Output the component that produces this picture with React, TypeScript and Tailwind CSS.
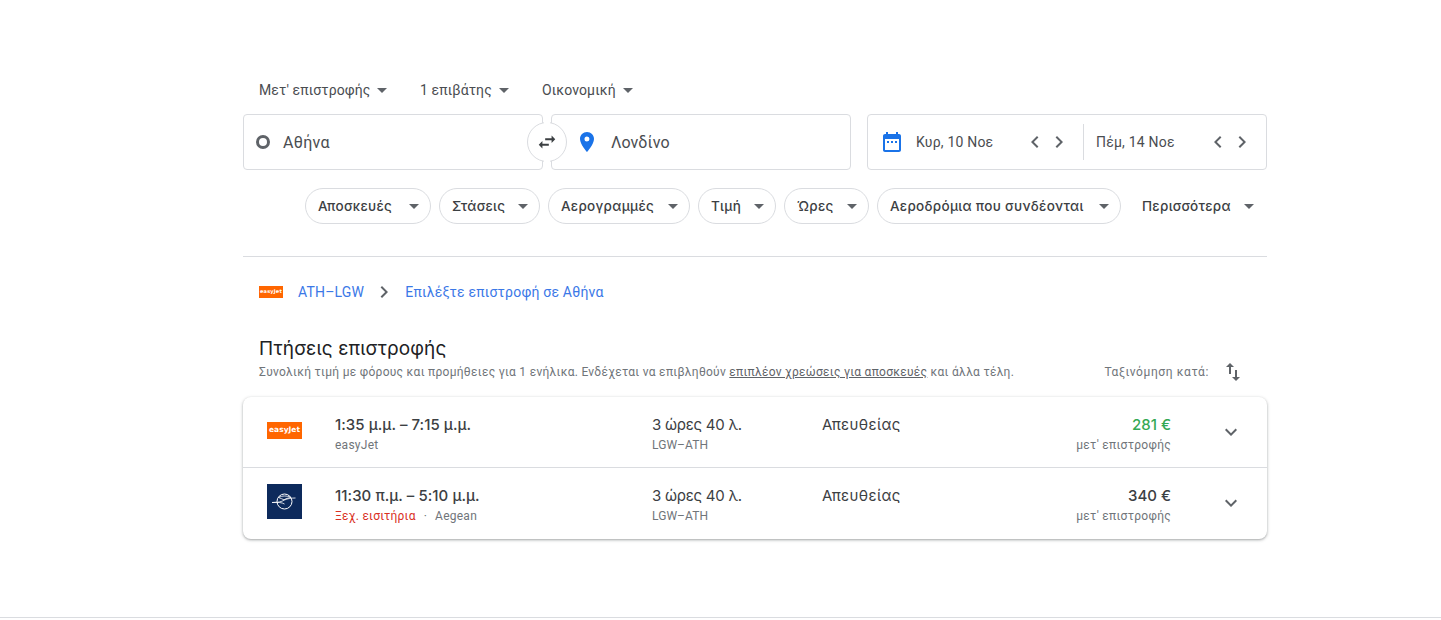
import React from "react";

const Caret = ({ className = "" }: { className?: string }) => (
  <svg width="10" height="5" viewBox="0 0 10 5" className={`shrink-0 ${className}`}><path d="M0 0l5 5 5-5z" fill="#5f6368" /></svg>
);
const Chev = ({ dir }: { dir: "l" | "r" }) => (
  <svg width="24" height="24" viewBox="0 0 24 24" fill="#5f6368">
    {dir === "l" ? <path d="M15.41 7.41 14 6l-6 6 6 6 1.41-1.41L10.83 12z" /> : <path d="M8.59 16.59 10 18l6-6-6-6-1.41 1.41L13.17 12z" />}
  </svg>
);
const Expand = () => (
  <svg width="24" height="24" viewBox="0 0 24 24" fill="#5f6368"><path d="M16.59 8.59 12 13.17 7.41 8.59 6 10l6 6 6-6z" /></svg>
);

const Top = ({ label, w }: { label: string; w: string }) => (
  <div className={`flex items-center gap-[7px] pl-4 ${w}`}>
    <span className="text-[14px] text-[#4a4d51] tracking-[0.1px]">{label}</span>
    <Caret />
  </div>
);

const Chip = ({ label, w }: { label: string; w: string }) => (
  <div className={`flex h-9 items-center justify-between rounded-full border border-[#dadce0] pl-3 pr-[11px] ${w}`}>
    <span className="font-['Inter',sans-serif] text-[13.5px] font-medium text-[#3c4043] tracking-[0.3px]">{label}</span>
    <Caret />
  </div>
);

const EasyJet = ({ big }: { big?: boolean }) => (
  <div className={`flex items-center justify-center bg-[#ff6600] font-['DejaVu_Sans',sans-serif] font-bold text-[#fff] ${big ? "h-[17px] w-[35px] text-[7.5px]" : "h-3 w-6 text-[5px]"}`}>easyJet</div>
);

const Aegean = () => (
  <div className="flex h-[35px] w-[35px] items-center justify-center bg-[#0d2a5c]">
    <svg width="35" height="35" viewBox="0 0 35 35" fill="none" stroke="#fff">
      <circle cx="17.500" cy="17.500" r="7.500" strokeWidth="1" />
      <path d="M5 18.500c6 0 9-.500 12.500-2.500 3-1.500 7-2 11-2" strokeWidth="0.8" />
      <path d="M11.500 13.500c4-2 8-2 12.500 0-3 .500-5.500 1.200-7 2.300-2-.800-3.500-1.700-5.500-2.300zM5 18.500c6-.500 10 0 12.500 1.500" strokeWidth="0.8" />
    </svg>
  </div>
);

const Main = ({ children, cls = "" }: { children: React.ReactNode; cls?: string }) => (
  <div className={`font-['Inter',sans-serif] text-[15px] leading-5 text-[#3c4043] ${cls}`}>{children}</div>
);

const Row = ({ logo, time, sub, price, green, h }: { logo: React.ReactNode; time: string; sub: React.ReactNode; price: string; green?: boolean; h: string }) => (
  <div className={`flex items-center ${h}`}>
    <div className="mb-1 flex w-[92px] justify-start pl-6">{logo}</div>
    <div className="mt-1 w-[317px]">
      <Main cls="font-medium tracking-[0.05px]">{time}</Main>
      <div className="mt-[2px] text-[12px] leading-4 text-[#70757a] tracking-[0.25px]">{sub}</div>
    </div>
    <div className="mt-1 w-[170px]">
      <Main cls="tracking-[-0.25px]">3 ώρες 40 λ.</Main>
      <div className="mt-[2px] text-[12px] leading-4 text-[#70757a] tracking-[0.15px]">LGW–ATH</div>
    </div>
    <div className="mt-1 w-[120px]">
      <Main cls="tracking-[0.4px]">Απευθείας</Main>
      <div className="mt-[2px] h-4" />
    </div>
    <div className="mt-1 w-[229px] text-right">
      <div className={`font-['Inter',sans-serif] text-[15px] font-medium leading-5 ${green ? "text-[#34a853]" : "text-[#3c4043]"}`}>{price}</div>
      <div className="mt-[2px] text-[12px] leading-4 text-[#70757a] tracking-[0.28px]">μετ' επιστροφής</div>
    </div>
    <div className="ml-[48px]"><Expand /></div>
  </div>
);

export default function App() {
  return (
    <div className="relative h-[620px] w-full overflow-hidden bg-white font-['Roboto',sans-serif]">
      <div className="ml-[243px] w-[1024px] pt-[79px]">
        <div className="flex h-[22px] items-center">
          <Top label="Μετ' επιστροφής" w="w-[161px]" />
          <Top label="1 επιβάτης" w="w-[122px]" />
          <Top label="Οικονομική" w="w-auto" />
        </div>

        <div className="mt-[13px] flex h-14">
          <div className="relative flex">
            <div className="flex h-14 w-[300px] items-center rounded border border-[#dadce0] pl-3">
              <span className="mr-[13px] block h-[14px] w-[14px] rounded-full border-[3px] border-[#5f6368]" />
              <span className="mt-[2px] text-[16px] text-[#4a4d51] tracking-[0.3px]">Αθήνα</span>
            </div>
            <div className="ml-2 flex h-14 w-[300px] items-center rounded border border-[#dadce0] pl-6">
              <svg width="24" height="24" viewBox="0 0 24 24" fill="#1a73e8" className="mr-[12px] ml-[-1px]"><path d="M12 2C8.130 2 5 5.130 5 9c0 5.250 7 13 7 13s7-7.750 7-13c0-3.870-3.130-7-7-7zm0 9.500a2.500 2.500 0 1 1 0-5 2.500 2.500 0 0 1 0 5z" /></svg>
              <span className="mt-[2px] text-[16px] text-[#4a4d51] tracking-[0.1px]">Λονδίνο</span>
            </div>
            <div className="absolute left-[284px] top-[8px] flex h-10 w-10 items-center justify-center rounded-full border border-[#dadce0] bg-white">
              <svg width="22" height="22" viewBox="0 0 24 24" fill="#3c4043"><path d="M6.990 11 3 15l3.990 4v-3H14v-2H6.990zM21 9l-3.990-4v3H10v2h7.010v3z" /></svg>
            </div>
            <div className="absolute left-[301px] top-0 h-[10px] w-[6px] bg-white" />
            <div className="absolute left-[301px] bottom-0 h-[10px] w-[6px] bg-white" />
          </div>

          <div className="ml-4 flex h-14 w-[400px] items-center rounded border border-[#dadce0] pl-[12px]">
            <svg width="24" height="24" viewBox="0 0 24 24" fill="#1a73e8" className="mr-[12px]"><path d="M19 4h-1V2h-2v2H8V2H6v2H5c-1.110 0-2 .900-2 2v14c0 1.100.890 2 2 2h14c1.100 0 2-.900 2-2V6c0-1.100-.900-2-2-2zm0 16H5V9h14zM7 11h2v2H7zm4 0h2v2h-2zm4 0h2v2h-2z" /></svg>
            <span className="w-[107px] text-[14px] text-[#4a4d51] tracking-[0.2px]">Κυρ, 10 Νοε</span>
            <Chev dir="l" /><Chev dir="r" />
            <span className="ml-[12px] h-9 w-px bg-[#dadce0]" />
            <span className="ml-3 w-[110px] text-[14px] text-[#4a4d51] tracking-[0.2px]">Πέμ, 14 Νοε</span>
            <Chev dir="l" /><Chev dir="r" />
          </div>
        </div>

        <div className="mt-[18px] flex items-center gap-2 pl-[62px]">
          <Chip label="Αποσκευές" w="w-[126px]" />
          <Chip label="Στάσεις" w="w-[101px]" />
          <Chip label="Αερογραμμές" w="w-[142px]" />
          <Chip label="Τιμή" w="w-[78px]" />
          <Chip label="Ώρες" w="w-[85px]" />
          <Chip label="Αεροδρόμια που συνδέονται" w="w-[244px]" />
          <div className="flex h-9 w-[125px] items-center justify-between pl-[13px] pr-0">
            <span className="font-['Inter',sans-serif] text-[13.5px] font-medium text-[#3c4043] tracking-[0.3px]">Περισσότερα</span>
            <Caret />
          </div>
        </div>

        <div className="mt-8 h-px bg-[#dadce0]" />

        <div className="mt-[27px] flex h-[16px] items-center pl-4 text-[14px] text-[#3b78e7] tracking-[0.2px]">
          <EasyJet />
          <span className="ml-[15px]">ATH–LGW</span>
          <span className="ml-[8px]"><Chev dir="r" /></span>
          <span className="ml-[9px]">Επιλέξτε επιστροφή σε Αθήνα</span>
        </div>

        <div className="mt-[35px] pl-4 font-['Inter',sans-serif] text-[19px] leading-[28px] text-[#202124] tracking-[0.12px]">Πτήσεις επιστροφής</div>
        <div className="-mt-px flex h-5 items-center pl-4">
          <span className="text-[12px] text-[#70757a] tracking-[0.28px]">
            Συνολική τιμή με φόρους και προμήθειες για 1 ενήλικα. Ενδέχεται να επιβληθούν <span className="text-[#5f6368] underline">επιπλέον χρεώσεις για αποσκευές</span> και άλλα τέλη.
          </span>
          <span className="ml-auto text-[12px] text-[#70757a] tracking-[0.6px]">Ταξινόμηση κατά:</span>
          <svg width="24" height="24" viewBox="0 0 24 24" fill="#5f6368" className="ml-[12px] mr-[22px]"><path d="M16 17.010V10h-2v7.010h-3L15 21l4-3.990zM9 3 5 6.990h3V14h2V6.990h3z" /></svg>
        </div>

        <div className="mt-[15px] h-[142px] rounded-lg bg-white shadow-[0_1px_3px_1px_rgba(60,64,67,0.15),0_1px_2px_0_rgba(60,64,67,0.3)]">
          <Row h="h-[71px] border-b border-[#dadce0]" logo={<EasyJet big />} time="1:35 μ.μ. – 7:15 μ.μ." sub="easyJet" price="281 €" green />
          <Row h="h-[70px]" logo={<Aegean />} time="11:30 π.μ. – 5:10 μ.μ." sub={<><span className="text-[#d93025]">Ξεχ. εισιτήρια</span><span className="mx-[8px]">·</span>Aegean</>} price="340 €" />
        </div>
      </div>
      <div className="absolute bottom-[2px] left-0 h-px w-full bg-[#dadce0]" />
    </div>
  );
}
